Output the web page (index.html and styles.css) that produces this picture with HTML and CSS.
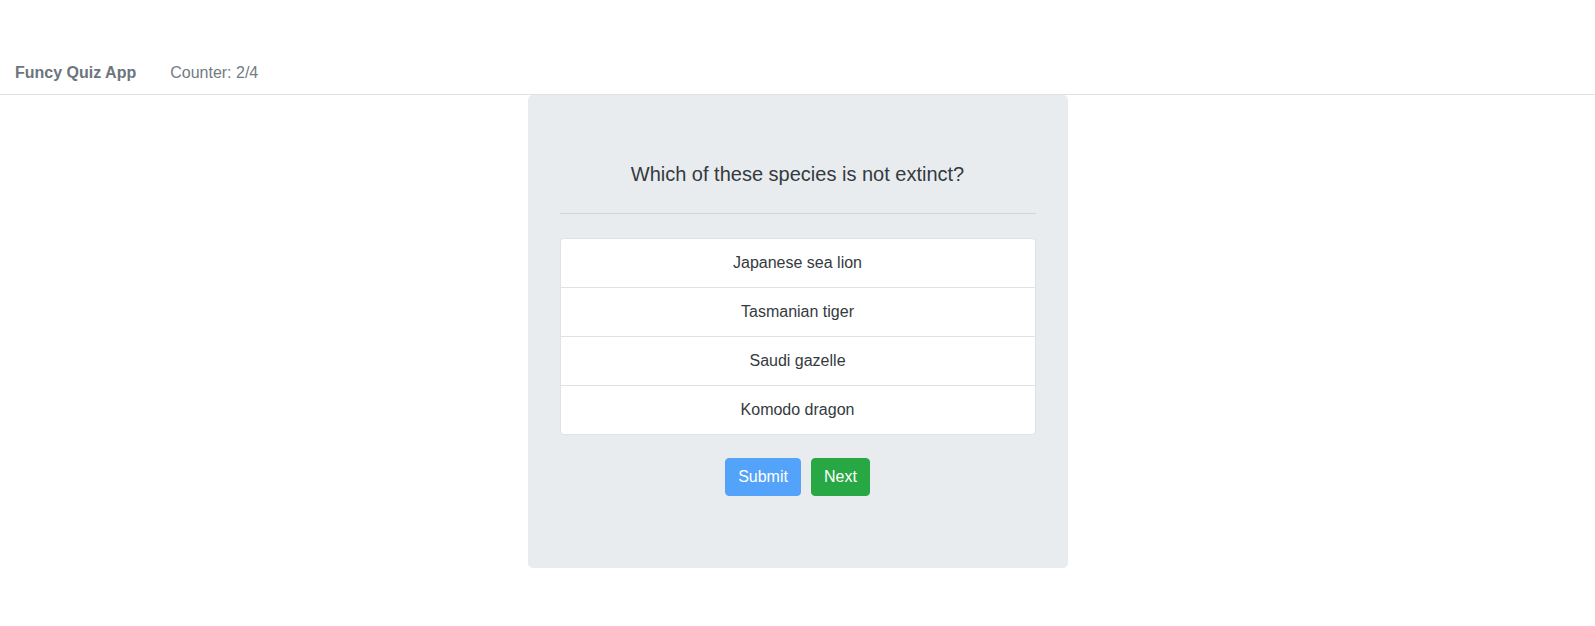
FILE: index.html
```html
<!DOCTYPE html>
<html lang="en">
<head>
<meta charset="utf-8">
<title>Funcy Quiz App</title>
<link rel="stylesheet" href="styles.css">
</head>
<body>
<header class="navbar">
  <span class="brand">Funcy Quiz App</span>
  <span class="counter">Counter: 2/4</span>
</header>
<main class="container">
  <section class="jumbotron">
    <h4 class="question">Which of these species is not extinct?</h4>
    <hr class="divider">
    <ul class="answers">
      <li class="answer">Japanese sea lion</li>
      <li class="answer">Tasmanian tiger</li>
      <li class="answer">Saudi gazelle</li>
      <li class="answer">Komodo dragon</li>
    </ul>
    <div class="actions">
      <button class="btn btn-submit" disabled>Submit</button>
      <button class="btn btn-next">Next</button>
    </div>
  </section>
</main>
</body>
</html>
```
FILE: styles.css
```css
* { box-sizing: border-box; }
html, body {
  margin: 0;
  padding: 0;
  background: #fff;
  font-family: "Liberation Sans", Arial, sans-serif;
  font-size: 16px;
  line-height: 24px;
  color: #343a40;
}
.navbar {
  display: flex;
  align-items: center;
  gap: 34px;
  padding: 61px 15px 9px;
  border-bottom: 1px solid #dee2e6;
}
.brand {
  font-weight: bold;
  color: #6c757d;
}
.counter {
  color: #737b83;
}
.container {
  display: flex;
  justify-content: center;
}
.jumbotron {
  width: 540px;
  background: #e9ecef;
  border-radius: 5px;
  padding: 67px 32px 72px;
}
.question {
  margin: 0;
  font-size: 20px;
  line-height: 24px;
  font-weight: normal;
  text-align: center;
  color: #343a40;
}
.divider {
  margin: 27px 0 24px;
  border: 0;
  border-top: 1px solid #d2d4d7;
  height: 0;
}
.answers {
  list-style: none;
  margin: 0;
  padding: 0;
  background: #fff;
  border: 1px solid #dee2e6;
  border-radius: 4px;
}
.answer {
  padding: 12px 20px;
  text-align: center;
  color: #343a40;
  border-top: 1px solid #dee2e6;
}
.answer:first-child { border-top: 0; }
.actions {
  display: flex;
  justify-content: center;
  gap: 10px;
  margin-top: 23px;
}
.btn {
  font-family: inherit;
  font-size: 16px;
  line-height: 24px;
  padding: 6px 12px;
  border: 1px solid transparent;
  border-radius: 4px;
  color: #fff;
}
.btn-submit {
  background: #52a3f9;
  border-color: #52a3f9;
}
.btn-next {
  background: #28a745;
  border-color: #28a745;
}
```
